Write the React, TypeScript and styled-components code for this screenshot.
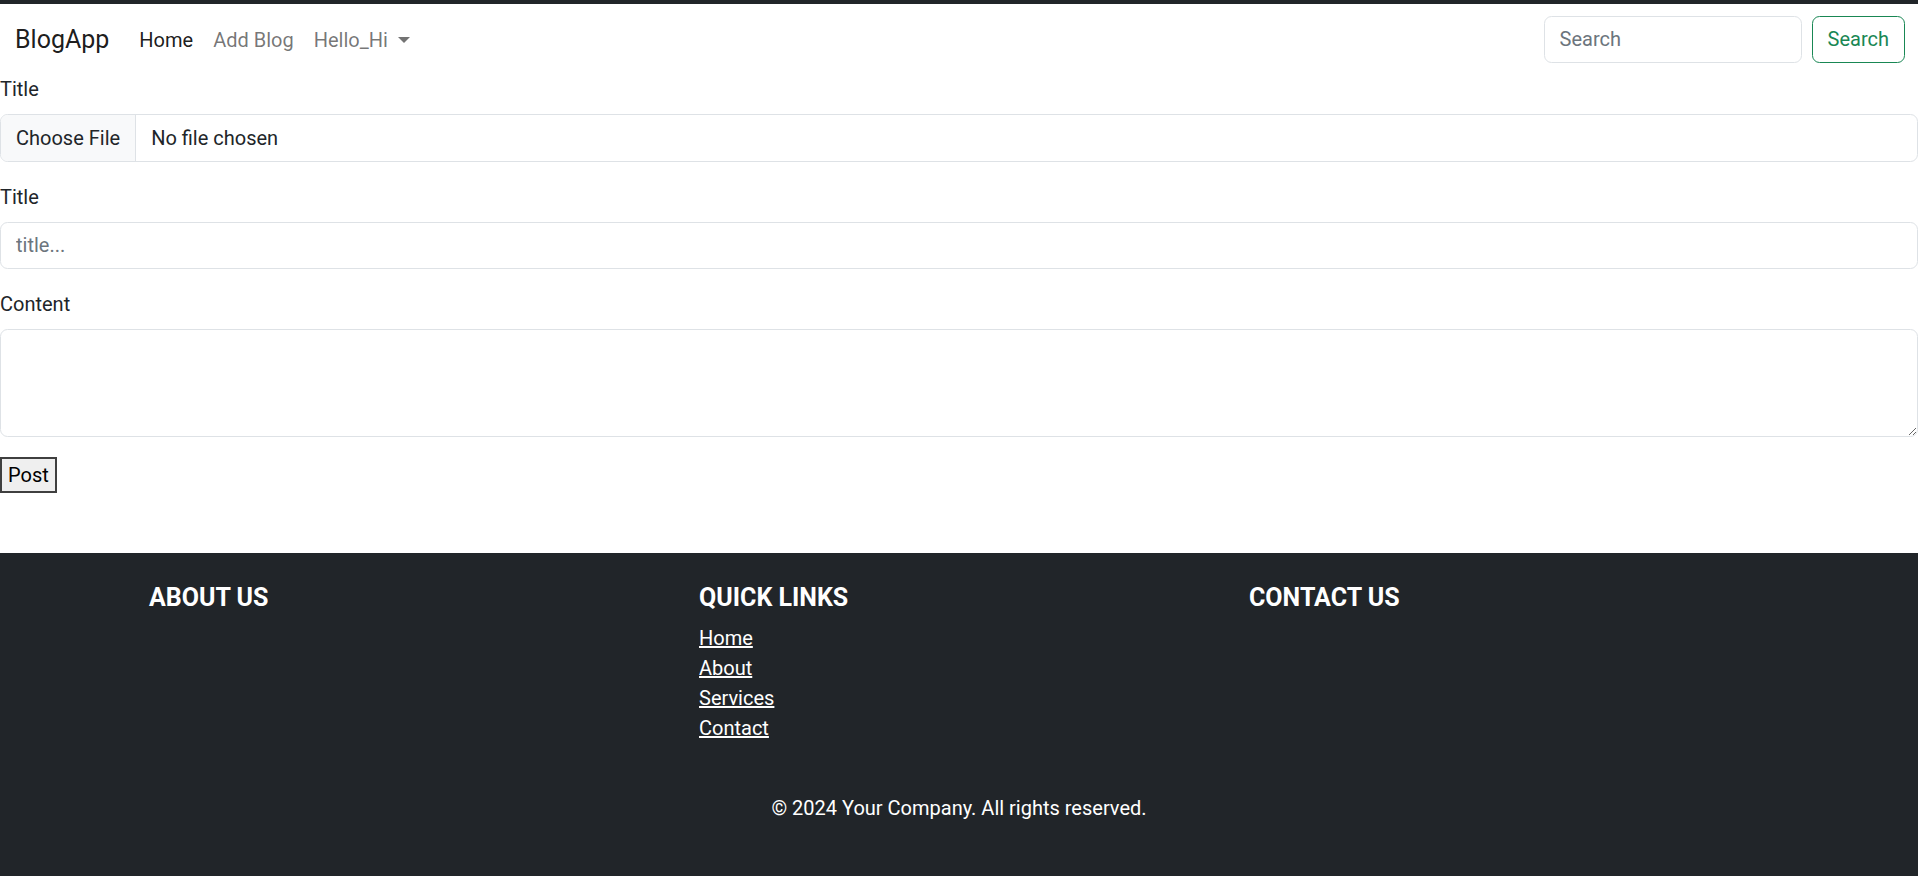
import React from "react";
import styled, { createGlobalStyle } from "styled-components";

const Global = createGlobalStyle`
  * { box-sizing: border-box; }
  html, body { margin: 0; padding: 0; background: #fff; }
  body {
    font-family: Roboto, "Noto Sans", sans-serif;
    font-size: 20px;
    line-height: 1.5;
    color: #212529;
  }
`;

const Page = styled.div`
  display: flex;
  flex-direction: column;
  border-top: 4px solid #212529;
`;

const Navbar = styled.nav`
  display: flex;
  align-items: center;
  justify-content: space-between;
  padding: 11px 13px 9px 15px;
  height: 70px;
`;

const NavLeft = styled.div`
  display: flex;
  align-items: center;
`;

const Brand = styled.a`
  font-size: 25px;
  color: rgba(0, 0, 0, 0.9);
  margin-right: 20px;
  text-decoration: none;
  line-height: 37.5px;
`;

const NavLink = styled.a<{ $active?: boolean }>`
  padding: 10px;
  line-height: 30px;
  color: ${(p) => (p.$active ? "rgba(0,0,0,0.9)" : "rgba(0,0,0,0.55)")};
  text-decoration: none;
  display: flex;
  align-items: center;
`;

const Caret = styled.span`
  display: inline-block;
  margin-left: 10px;
  border-top: 6px solid rgba(0, 0, 0, 0.55);
  border-left: 6px solid transparent;
  border-right: 6px solid transparent;
`;

const SearchForm = styled.form`
  display: flex;
  gap: 10px;
  margin-top: -2px;
`;

const SearchInput = styled.input`
  width: 258px;
  height: 47px;
  padding: 7.5px 15px;
  font: inherit;
  color: #212529;
  border: 1px solid #dee2e6;
  border-radius: 7.5px;
  outline: none;
  &::placeholder { color: #6c757d; }
`;

const OutlineButton = styled.button`
  height: 47px;
  padding: 7.5px 15px;
  font: inherit;
  color: #198754;
  background: #fff;
  border: 1px solid #198754;
  border-radius: 7.5px;
`;

const Form = styled.form`
  display: flex;
  flex-direction: column;
  padding-bottom: 60px;
`;

const Field = styled.div`
  display: flex;
  flex-direction: column;
  margin-bottom: 20px;
`;

const Label = styled.label`
  line-height: 30px;
  margin-bottom: 10px;
`;

const FileInput = styled.input`
  width: 100%;
  height: 47.5px;
  font: inherit;
  color: #212529;
  border: 1px solid #dee2e6;
  border-radius: 7.5px;
  overflow: hidden;
  padding: 0 15px 0 0;
  background: #fff;
  &::file-selector-button {
    font: inherit;
    color: #212529;
    height: 100%;
    padding: 0 15px;
    margin: 0 15px 0 0;
    border: none;
    border-right: 1px solid #dee2e6;
    background: #f8f9fa;
    border-radius: 0;
  }
`;

const TextInput = styled.input`
  width: 100%;
  height: 47.5px;
  padding: 7.5px 15px;
  font: inherit;
  color: #212529;
  border: 1px solid #dee2e6;
  border-radius: 7.5px;
  outline: none;
  &::placeholder { color: #6c757d; }
`;

const TextArea = styled.textarea`
  width: 100%;
  height: 107.5px;
  padding: 7.5px 15px;
  font: inherit;
  color: #212529;
  border: 1px solid #dee2e6;
  border-radius: 7.5px;
  outline: none;
  resize: vertical;
  display: block;
`;

const PostButton = styled.button`
  align-self: flex-start;
  font: inherit;
  line-height: 30px;
  padding: 1px 6px;
  color: #000;
  background: #efefef;
  border: 2px solid #3f3f3f;
  border-radius: 0;
`;

const Footer = styled.footer`
  background: #212529;
  color: #fff;
  padding: 30px 0 34px;
`;

const Container = styled.div`
  width: 1650px;
  margin: 0 auto;
  padding: 0 15px;
`;

const Row = styled.div`
  display: grid;
  grid-template-columns: repeat(3, 1fr);
  column-gap: 30px;
`;

const Col = styled.div`
  display: flex;
  flex-direction: column;
`;

const FooterHeading = styled.h5`
  margin: 0 0 10px;
  font-size: 25px;
  line-height: 30px;
  font-weight: 700;
`;

const LinkList = styled.ul`
  list-style: none;
  margin: 0 0 20px;
  padding: 0;
`;

const FooterLink = styled.a`
  color: #fff;
  text-decoration: underline;
  line-height: 30px;
`;

const Copyright = styled.p`
  margin: 30px 0 20px;
  text-align: center;
  line-height: 30px;
`;

export default function App() {
  return (
    <>
      <Global />
      <Page>
        <Navbar>
          <NavLeft>
            <Brand href="#">BlogApp</Brand>
            <NavLink $active href="#">Home</NavLink>
            <NavLink href="#">Add Blog</NavLink>
            <NavLink href="#">
              Hello_Hi<Caret />
            </NavLink>
          </NavLeft>
          <SearchForm onSubmit={(e) => e.preventDefault()}>
            <SearchInput placeholder="Search" />
            <OutlineButton type="button">Search</OutlineButton>
          </SearchForm>
        </Navbar>
        <Form onSubmit={(e) => e.preventDefault()}>
          <Field>
            <Label>Title</Label>
            <FileInput type="file" />
          </Field>
          <Field>
            <Label>Title</Label>
            <TextInput placeholder="title..." />
          </Field>
          <Field>
            <Label>Content</Label>
            <TextArea />
          </Field>
          <PostButton type="button">Post</PostButton>
        </Form>
        <Footer>
          <Container>
            <Row>
              <Col>
                <FooterHeading>ABOUT US</FooterHeading>
              </Col>
              <Col>
                <FooterHeading>QUICK LINKS</FooterHeading>
                <LinkList>
                  <li><FooterLink href="#">Home</FooterLink></li>
                  <li><FooterLink href="#">About</FooterLink></li>
                  <li><FooterLink href="#">Services</FooterLink></li>
                  <li><FooterLink href="#">Contact</FooterLink></li>
                </LinkList>
              </Col>
              <Col>
                <FooterHeading>CONTACT US</FooterHeading>
              </Col>
            </Row>
            <Copyright>© 2024 Your Company. All rights reserved.</Copyright>
          </Container>
        </Footer>
      </Page>
    </>
  );
}
